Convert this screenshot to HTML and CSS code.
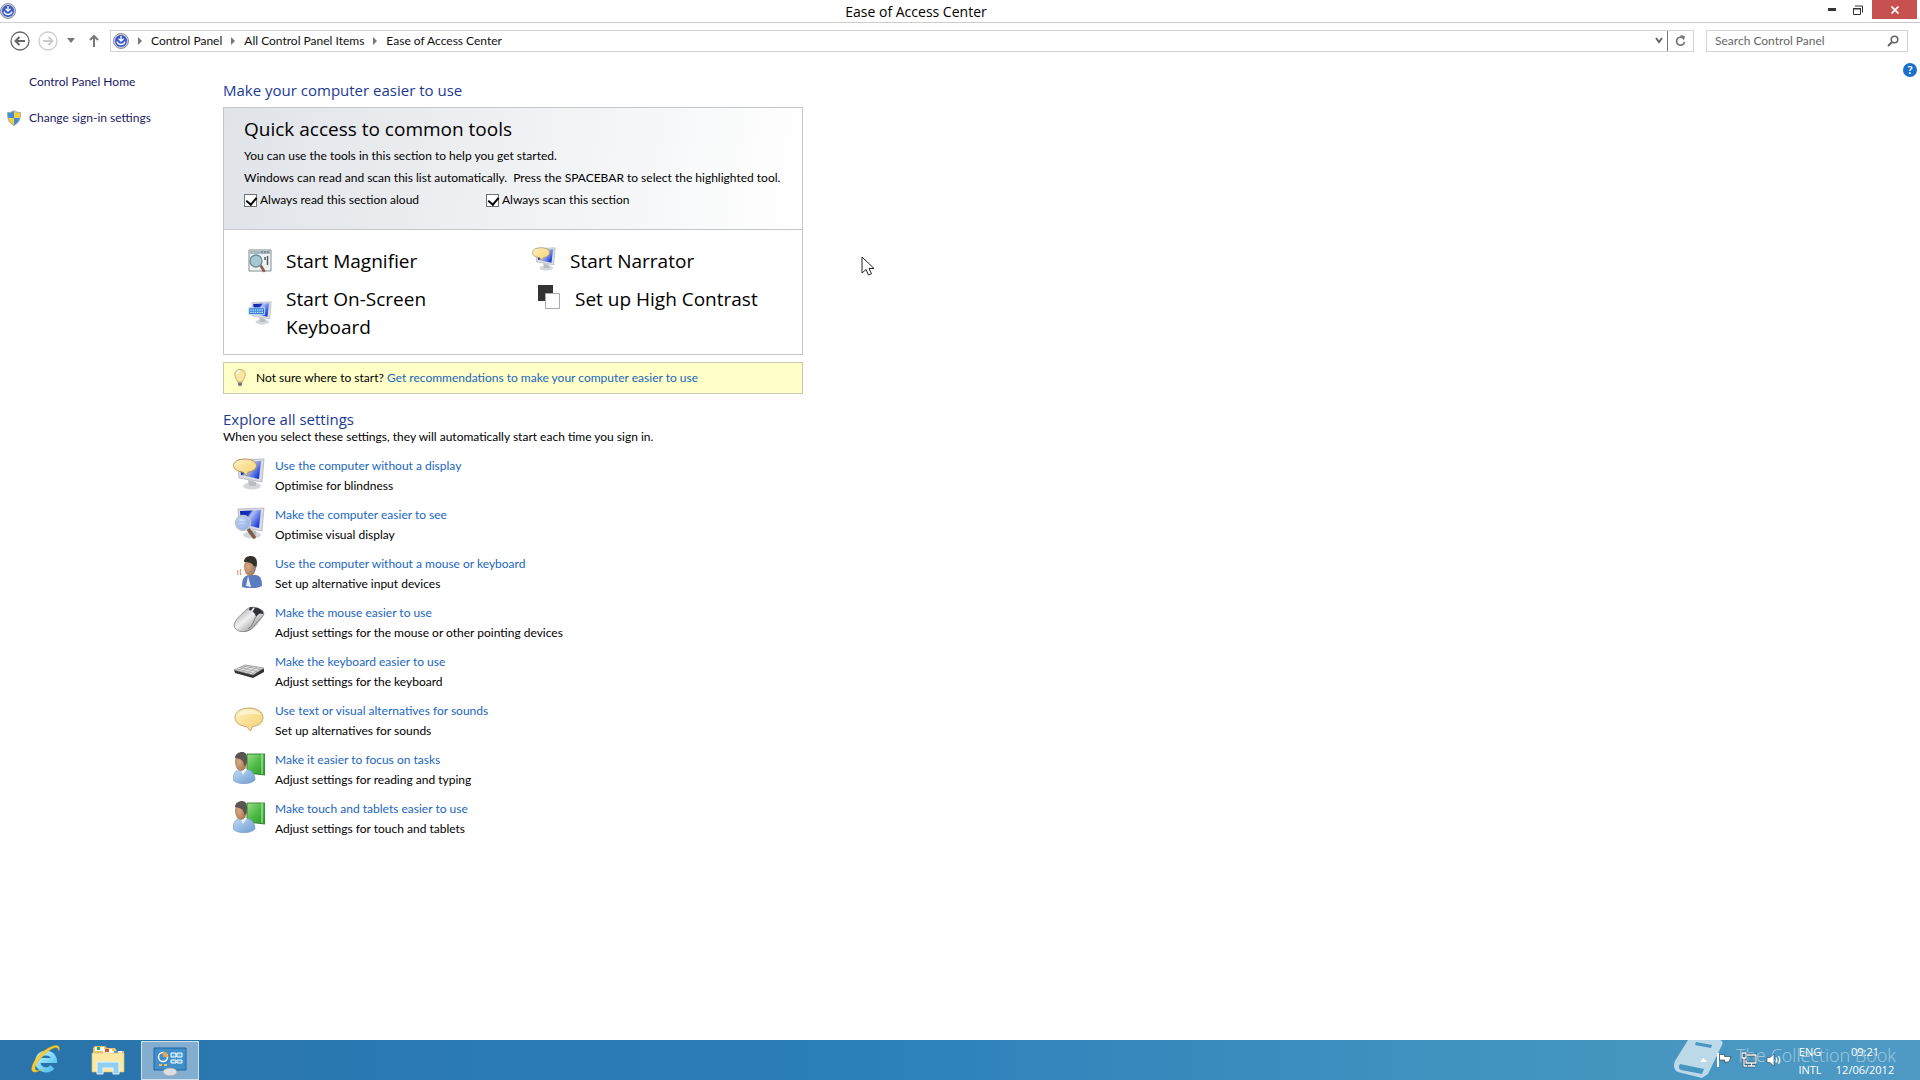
FILE: index.html
```html
<!DOCTYPE html>
<html lang="en">
<head>
  <meta charset="UTF-8" />
  <meta name="viewport" content="width=device-width, initial-scale=1.0" />
  <title>Ease of Access Center</title>
  <link rel="stylesheet" href="styles.css">
</head>
<body>
  <!-- shared icons -->
  <svg class="defs" width="0" height="0" aria-hidden="true">
    <defs>
      <linearGradient id="screenBlue" x1="0" y1="0" x2="1" y2="0.6">
        <stop offset="0" stop-color="#0a1fa8" />
        <stop offset="0.4" stop-color="#1634c4" />
        <stop offset="0.5" stop-color="#b4c4f4" />
        <stop offset="1" stop-color="#2040d8" />
      </linearGradient>
      <linearGradient id="bubbleGold" x1="0" y1="0" x2="1" y2="1">
        <stop offset="0" stop-color="#fff3c9" />
        <stop offset="0.5" stop-color="#fbdf93" />
        <stop offset="1" stop-color="#f6d27c" />
      </linearGradient>
      <linearGradient id="greenBook" x1="0" y1="0" x2="1" y2="1">
        <stop offset="0" stop-color="#9be08a" />
        <stop offset="0.5" stop-color="#4cba45" />
        <stop offset="1" stop-color="#2a9a2c" />
      </linearGradient>
      <linearGradient id="mouseBody" x1="0" y1="0" x2="1" y2="1">
        <stop offset="0" stop-color="#8d8d8d" />
        <stop offset="0.45" stop-color="#f0f0f0" />
        <stop offset="1" stop-color="#6d6d6d" />
      </linearGradient>
      <radialGradient id="skin" cx="0.35" cy="0.5" r="0.8">
        <stop offset="0" stop-color="#d8ab86" />
        <stop offset="1" stop-color="#94663f" />
      </radialGradient>
      <linearGradient id="shirt" x1="0" y1="0" x2="1" y2="1">
        <stop offset="0" stop-color="#c3dcf5" />
        <stop offset="1" stop-color="#6c9bd0" />
      </linearGradient>
      <radialGradient id="lens" cx="0.4" cy="0.4" r="0.7">
        <stop offset="0" stop-color="#d7e6fb" />
        <stop offset="1" stop-color="#7f9fe0" />
      </radialGradient>
      <linearGradient id="ieBlue" x1="0" y1="0" x2="1" y2="1">
        <stop offset="0" stop-color="#b9f0ff" />
        <stop offset="1" stop-color="#4cc0f2" />
      </linearGradient>

      <symbol id="i-access" viewBox="0 0 16 16">
        <circle cx="8" cy="8" r="7.5" fill="#c9cdd6" stroke="#8a8f9c" />
        <circle cx="8" cy="8" r="6" fill="#3a59cc" />
        <path d="M8 3v5M5.6 5.8L8 8.2l2.6-2.4M4 8.5c.6 2 2 3 4 3s3.4-1 4-3" fill="none" stroke="#fff" stroke-width="1.3" />
      </symbol>
      <symbol id="i-monitor" viewBox="0 0 32 32">
        <ellipse cx="19" cy="28" rx="9" ry="3.5" fill="#d4d6d9" />
        <path d="M15 22l8 2v4h-7z" fill="#b9bcc0" />
        <path d="M5 2l26-1-2 23L6 20z" fill="#d9dce1" stroke="#a7abb3" stroke-width="0.7" />
        <path d="M7 4l21-1-2 18L8 17z" fill="url(#screenBlue)" />
      </symbol>
      <symbol id="i-bubble" viewBox="0 0 32 32">
        <path d="M16 5c8 0 14 4 14 9.5S25 23 19.5 23.6L17.5 28l-4-4.4C6.5 23 2 19.5 2 14.5 2 9 8 5 16 5z" fill="url(#bubbleGold)" stroke="#b8a069" stroke-width="0.9" />
        <path d="M5 13c1-4 6-6 11-6s10 2 11 5c-7-2-16-1-22 1z" fill="#fff8df" opacity="0.7" />
      </symbol>
      <symbol id="i-narrator" viewBox="0 0 32 32">
        <use href="#i-monitor" />
        <path d="M12 1c7 0 11.5 3 11.5 6.5S19.5 13.6 15 14.2L14 18l-4-3.8C4.5 13.5.5 11 .5 7.5S5 1 12 1z" fill="url(#bubbleGold)" stroke="#a58c52" stroke-width="0.9" />
      </symbol>
      <symbol id="i-see" viewBox="0 0 32 32">
        <use href="#i-monitor" />
        <path d="M15 22l6 8" stroke="#7d5b48" stroke-width="3.6" stroke-linecap="round" />
        <circle cx="10" cy="16" r="7.3" fill="url(#lens)" stroke="#b9c3cf" stroke-width="1.8" />
        <path d="M5 15h10M6 18h8" stroke="#9cb3e2" />
      </symbol>
      <symbol id="i-speech" viewBox="0 0 32 32">
        <path d="M9 31c0-7 1-11 7-12h7c5 1 6 5 6 11-6 3-13 3-20 1z" fill="#5c7cc2" />
        <path d="M15 20l3 11-5-1z" fill="#e8eefa" />
        <ellipse cx="17" cy="11" rx="6" ry="9" fill="url(#skin)" />
        <path d="M11 6c0-4 3-6 7-6 5 0 7 4 5.5 11l-2 1c-1-4-3-6-10.5-6z" fill="#34302d" />
        <path d="M22 10c0 4-2 6-6 6" stroke="#8c8c98" fill="none" stroke-width="1.3" />
        <path d="M8 13q-2 3 0 6M5 14q-1 2 0 5" stroke="#d98a5a" fill="none" />
      </symbol>
      <symbol id="i-mouse" viewBox="0 0 32 32">
        <path d="M9 27c8 1 16-6 22-18l-2-4z" fill="#555" opacity="0.4" />
        <path d="M1 20C2 14 9 9 14 4c4-3 11-2 16 2 2 3 0 6-3 8-4 3-5 7-9 10-5 4-16 4-17-4z" fill="url(#mouseBody)" stroke="#777" stroke-width="0.7" />
        <path d="M17 2l8 1c4 2 6 4 5 6-3-1-4-1-7 3-1-4-3-6-7-7z" fill="#2f3136" />
        <path d="M21 3l-3 4" stroke="#e8e8e8" stroke-width="1.8" />
        <path d="M23 12c-3 4-3 9-8 12" stroke="#777" fill="none" />
      </symbol>
      <symbol id="i-keyboard" viewBox="0 0 32 32">
        <path d="M1 16l1 3 18 5 11-6v-3z" fill="#333" />
        <path d="M1 16l11-5 19 3-11 7z" fill="#e6e6e6" stroke="#777" stroke-width="0.6" />
        <path d="M4 15l17 4.5M7 13.5l17 4M10 12l18 3.5M9 18l10-6M14 19l10-6M5 16.5l9-5M19 20l9-6" stroke="#9a9a9a" stroke-width="0.7" />
      </symbol>
      <symbol id="i-person" viewBox="0 0 32 32">
        <path d="M14 2l18 0v21l-18-2z" fill="url(#greenBook)" stroke="#2a7d2c" stroke-width="0.9" />
        <path d="M29 2v20" stroke="#c3efb8" />
        <path d="M0 28c0-7 3-10 8-11h5c5 1 9 4 9 11-5 5-17 5-22 0z" fill="url(#shirt)" stroke="#6d93bf" stroke-width="0.6" />
        <path d="M7 17l3 6 4-6z" fill="#f0f6fd" />
        <ellipse cx="8" cy="10" rx="6" ry="9" fill="url(#skin)" />
        <path d="M2 6c0-4 4-6 7-6 5 0 6 5 4.5 12l-2.5 2c0-5-2-7-9-8z" fill="#5a5551" />
      </symbol>
      <symbol id="i-magnifier" viewBox="0 0 24 24">
        <path d="M1 1h22v21H1z" fill="#eef2f3" stroke="#7f8e96" />
        <path d="M2 2h20v3H2z" fill="#a9b8c0" />
        <path d="M17 2v2M20 2v2M14 2v2" stroke="#59666d" />
        <path d="M19.5 7v9M17 8v3" stroke="#4c5a62" stroke-width="1.5" />
        <path d="M13 17l3 5" stroke="#94594b" stroke-width="2.6" stroke-linecap="round" />
        <circle cx="8" cy="12" r="6" fill="#a6c9cf" stroke="#6c8e99" stroke-width="1.3" />
      </symbol>
      <symbol id="i-osk" viewBox="0 0 32 32">
        <use href="#i-monitor" />
        <path d="M1 9h21v9H1z" fill="#2b7fd8" stroke="#d4e8fb" />
        <path d="M3 12h17M3 15h17" stroke="#fff" stroke-width="1.5" stroke-dasharray="2 1" />
      </symbol>
      <symbol id="i-contrast" viewBox="0 0 24 24">
        <path d="M1 0h15v16H1z" fill="#333" />
        <path d="M8.5 8.5h14v15h-14z" fill="#fff" stroke="#aaa" />
      </symbol>
      <symbol id="i-bulb" viewBox="0 0 12 18">
        <path d="M6 .5C2.5.5.7 3 .7 5.5.7 8.5 3 9.5 3.5 13h5C9 9.5 11.3 8.5 11.3 5.5 11.3 3 9.5.5 6 .5z" fill="#fbe7a4" stroke="#b69b58" stroke-width="0.8" />
        <path d="M3 5c0-2 1-3 3-3" stroke="#fff" fill="none" stroke-width="1.3" />
        <path d="M4 13.5h4v2.5L6 17.5 4 16z" fill="#777" />
      </symbol>
      <symbol id="i-shield" viewBox="0 0 16 16">
        <path d="M8 .5C6 2 4 2.5 1.5 2.5c0 6 1 10 6.5 13z" fill="#3d8fd8" />
        <path d="M8 .5c2 1.5 4 2 6.5 2 0 6-1 10-6.5 13z" fill="#f4cf3a" />
        <path d="M8 8v7.5C5 14 3 11.5 2 8z" fill="#f4cf3a" />
        <path d="M8 8v7.5c3-1.5 5-4 6-7.5z" fill="#3d8fd8" />
        <path d="M8 .7C6 2 4 2.6 1.5 2.6c0 6 1 10 6.5 12.9 5.5-2.9 6.5-6.9 6.5-12.9C12 2.6 10 2 8 .7z" fill="none" stroke="#a4a9b0" />
      </symbol>
    </defs>
  </svg>

  <div class="window">
    <header class="titlebar">
      <svg class="app-icon" width="16" height="16"><use href="#i-access" /></svg>
      <h1>Ease of Access Center</h1>
      <div class="window-buttons">
        <button aria-label="Minimise"><svg width="8" height="3"><path d="M0 0h8v3H0z" fill="#333" /></svg></button>
        <button aria-label="Restore"><svg width="10" height="10" viewBox="0 0 10 10"><path d="M.5 3.5h7v6h-7zM2 1h7.5v6.5" fill="none" stroke="#333" /><path d="M0 3h8v1.5H0z" fill="#333" /></svg></button>
        <button class="close" aria-label="Close"><svg width="8" height="8" viewBox="0 0 8 8"><path d="M.5.5l7 7M7.5.5l-7 7" stroke="#fff" stroke-width="1.7" /></svg></button>
      </div>
    </header>

    <nav class="toolbar">
      <button class="round" aria-label="Back"><svg width="20" height="20" viewBox="0 0 20 20" fill="none" stroke="#666"><circle cx="10" cy="10" r="9" stroke-width="1.3" /><path d="M15 10H6M9.5 6l-4 4 4 4" stroke-width="2" /></svg></button>
      <button class="round" aria-label="Forward"><svg width="20" height="20" viewBox="0 0 20 20" fill="none" stroke="#ccc"><circle cx="10" cy="10" r="9" stroke-width="1.3" /><path d="M5 10h9M10.5 6l4 4-4 4" stroke-width="2" /></svg></button>
      <button class="recent" aria-label="Recent locations"><svg width="8" height="5"><path d="M0 0h8L4 5z" fill="#777" /></svg></button>
      <button class="up" aria-label="Up"><svg width="10" height="13" viewBox="0 0 10 13" fill="none" stroke="#777" stroke-width="2"><path d="M5 13V2M1 6l4-4 4 4" /></svg></button>

      <div class="address">
        <svg class="address-icon" width="16" height="16"><use href="#i-access" /></svg>
        <svg class="crumb" width="4" height="8"><path d="M0 0l4 4-4 4z" fill="#777" /></svg>
        <a href="#">Control Panel</a>
        <svg class="crumb" width="4" height="8"><path d="M0 0l4 4-4 4z" fill="#777" /></svg>
        <a href="#">All Control Panel Items</a>
        <svg class="crumb" width="4" height="8"><path d="M0 0l4 4-4 4z" fill="#777" /></svg>
        <a href="#">Ease of Access Center</a>
        <button class="history" aria-label="Previous locations"><svg width="8" height="7" viewBox="0 0 8 7"><path d="M1 1l3 4 3-4" fill="none" stroke="#666" stroke-width="2" /></svg></button>
        <button class="refresh" aria-label="Refresh"><svg width="11" height="12" viewBox="0 0 11 12"><path d="M8 3a4 4 0 1 0 1.5 4" fill="none" stroke="#777" stroke-width="1.7" /><path d="M5 0l5 1-1 4.5z" fill="#777" /></svg></button>
      </div>

      <div class="search">
        <input type="text" placeholder="Search Control Panel" aria-label="Search Control Panel">
        <button aria-label="Search"><svg width="12" height="12" viewBox="0 0 12 12" fill="none" stroke="#666"><circle cx="7.5" cy="4.5" r="3.3" stroke-width="1.6" /><path d="M5 7L1 11" stroke-width="2" /></svg></button>
      </div>
    </nav>

    <div class="page">
      <aside class="sidebar">
        <a href="#">Control Panel Home</a>
        <a href="#" class="with-shield"><svg width="16" height="16"><use href="#i-shield" /></svg>Change sign-in settings</a>
      </aside>

      <main class="content">
        <h2>Make your computer easier to use</h2>

        <section class="quick">
          <div class="quick-head">
            <h3>Quick access to common tools</h3>
            <p>You can use the tools in this section to help you get started.</p>
            <p class="wide-space">Windows can read and scan this list automatically.  Press the SPACEBAR to select the highlighted tool.</p>
            <div class="checks">
              <label><input type="checkbox" checked>Always read this section aloud</label>
              <label><input type="checkbox" checked>Always scan this section</label>
            </div>
          </div>
          <div class="tools">
            <div class="tools-col">
              <a href="#"><svg width="24" height="24"><use href="#i-magnifier" /></svg><span>Start Magnifier</span></a>
              <a href="#"><svg width="24" height="24"><use href="#i-osk" /></svg><span>Start On-Screen Keyboard</span></a>
            </div>
            <div class="tools-col">
              <a href="#"><svg width="24" height="24"><use href="#i-narrator" /></svg><span>Start Narrator</span></a>
              <a href="#" class="contrast"><svg width="24" height="24"><use href="#i-contrast" /></svg><span>Set up High Contrast</span></a>
            </div>
          </div>
        </section>

        <div class="tip">
          <svg width="12" height="18"><use href="#i-bulb" /></svg>
          <p>Not sure where to start? <a href="#">Get recommendations to make your computer easier to use</a></p>
        </div>

        <h2 class="explore">Explore all settings</h2>
        <p class="explore-note">When you select these settings, they will automatically start each time you sign in.</p>

        <ul class="settings">
          <li><svg width="32" height="32"><use href="#i-narrator" /></svg><div><a href="#">Use the computer without a display</a><p>Optimise for blindness</p></div></li>
          <li><svg width="32" height="32"><use href="#i-see" /></svg><div><a href="#">Make the computer easier to see</a><p>Optimise visual display</p></div></li>
          <li><svg width="32" height="32"><use href="#i-speech" /></svg><div><a href="#">Use the computer without a mouse or keyboard</a><p>Set up alternative input devices</p></div></li>
          <li><svg width="32" height="32"><use href="#i-mouse" /></svg><div><a href="#">Make the mouse easier to use</a><p>Adjust settings for the mouse or other pointing devices</p></div></li>
          <li><svg width="32" height="32"><use href="#i-keyboard" /></svg><div><a href="#">Make the keyboard easier to use</a><p>Adjust settings for the keyboard</p></div></li>
          <li><svg width="32" height="32"><use href="#i-bubble" /></svg><div><a href="#">Use text or visual alternatives for sounds</a><p>Set up alternatives for sounds</p></div></li>
          <li><svg width="32" height="32"><use href="#i-person" /></svg><div><a href="#">Make it easier to focus on tasks</a><p>Adjust settings for reading and typing</p></div></li>
          <li><svg width="32" height="32"><use href="#i-person" /></svg><div><a href="#">Make touch and tablets easier to use</a><p>Adjust settings for touch and tablets</p></div></li>
        </ul>
      </main>

      <button class="help" aria-label="Help">?</button>
    </div>
  </div>

  <footer class="taskbar">
    <button class="task" aria-label="Internet Explorer">
      <svg width="34" height="34" viewBox="0 0 34 34">
        <path d="M10 18.5h15.5a8.5 8.5 0 1 0-2 6.5" fill="none" stroke="url(#ieBlue)" stroke-width="5" />
        <path d="M30 9c1-3 0-6-4-5.5C18 5 7 14 3.5 23c-1.5 4-1 7.5 3 7 2-.2 4-1.2 6-2.7-3 1.5-5.7 1.9-6.3 0C5 23 14 11.5 23 6.7 27 4.7 29.5 5.5 30 9z" fill="#f8cf32" stroke="#d9a51c" stroke-width="0.5" />
      </svg>
    </button>
    <button class="task" aria-label="File Explorer">
      <svg width="34" height="34" viewBox="0 0 34 34">
        <path d="M2 6l2-2h10l2 2h8l2 3h7v20H2z" fill="#e9c568" />
        <path d="M4 5h9v4H4z" fill="#fff" /><path d="M6 5h3v3H6z" fill="#2fae48" />
        <path d="M12 7h9v4h-9z" fill="#fff" /><path d="M14 7h4v3h-4z" fill="#d6532e" />
        <path d="M20 9h11v4H20z" fill="#fff" /><path d="M23 9h4v3h-4z" fill="#3b9fd6" />
        <path d="M1 11h32v19H1z" fill="#fbe9a3" stroke="#dfc068" stroke-width="0.6" />
        <path d="M6 32V20h22v12h-6v-6H12v6z" fill="#8fd0f2" stroke="#e3f5fe" />
      </svg>
    </button>
    <button class="task active" aria-label="Ease of Access Center">
      <svg width="34" height="34" viewBox="0 0 34 34">
        <path d="M1 6h32v22H1z" fill="#3f8fca" stroke="#1f66a3" />
        <circle cx="10" cy="15" r="4.5" fill="none" stroke="#fff" stroke-width="1.5" />
        <path d="M10 15V9.5a5.5 5.5 0 0 1 5 5.5z" fill="#f5a23c" />
        <path d="M18 11h5v4h-5zM24 11h5v4h-5zM18 18h5v3h-5zM24 18h5v3h-5z" fill="#5aa9dd" stroke="#fff" />
        <path d="M6 22h3v2H6zM11 22h3v2h-3z" fill="#f5c04c" />
        <ellipse cx="17" cy="30" rx="7" ry="4" fill="#dcdfe2" stroke="#999" stroke-width="0.7" />
      </svg>
    </button>

    <div class="tray">
      <button aria-label="Show hidden icons"><svg width="7" height="4"><path d="M0 4h7L3.5 0z" fill="#fff" /></svg></button>
      <button aria-label="Action Center"><svg width="16" height="16" viewBox="0 0 16 16"><path d="M2 1v14" stroke="#fff" stroke-width="2" /><path d="M3.5 2.5h5v2H15L13 10H8.5V8h-5z" fill="#fff" stroke="#234" stroke-width="0.6" /></svg></button>
      <button aria-label="Network"><svg width="16" height="16" viewBox="0 0 16 16" fill="none"><path d="M6 3h9v8H5V8M7 14h7M10.5 11v3M1 1h4v5H1zM3 6v8h3" stroke="#234" stroke-width="2.4" /><path d="M6 3h9v8H5V8M7 14h7M10.5 11v3M1 1h4v5H1zM3 6v8h3" stroke="#fff" stroke-width="1.3" /></svg></button>
      <button aria-label="Volume"><svg width="16" height="16" viewBox="0 0 16 16"><path d="M1 5.5h3L8 2v12l-4-3.5H1z" fill="#fff" stroke="#345" stroke-width="0.6" /><path d="M10 5.5q1.5 2.5 0 5M12.5 4q2.5 4 0 8" fill="none" stroke="#fff" stroke-width="1.2" /></svg></button>
      <button class="lang"><span>ENG</span><span>INTL</span></button>
      <button class="clock"><span>09:21</span><span>12/06/2012</span></button>
    </div>

    <div class="watermark">
      <svg width="50" height="40" viewBox="0 0 50 40">
        <path fill-rule="evenodd" d="M14 0h32c3 1 3 3 2 5L34 34l-6 4-24-6c-4-2-5-6-3-11zM22 2l-1 3 16 3 1-3zM6 24c-2 3-1 5 1 6l21 4 2-5z" fill="#bcd9ea" />
      </svg>
      <span>The Collection Book</span>
    </div>
  </footer>

  <svg class="pointer" width="14" height="21" viewBox="0 0 14 21"><path d="M1 1v16l4-3.5 2.5 5.5 3-1.2L8 12.5h5z" fill="#fff" stroke="#222" /></svg>
</body>
</html>
```
FILE: styles.css
```css
* {
  box-sizing: border-box;
}

body {
  margin: 0;
  height: 100vh;
  display: flex;
  flex-direction: column;
  overflow: hidden;
  background: #fff;
  color: #000;
  font-family: Lato, "Open Sans", sans-serif;
  font-size: 12px;
  line-height: 16px;
}

h1, h2, h3, p, ul {
  margin: 0;
  padding: 0;
  font-weight: normal;
}

h1, h2, h3, .tools, .watermark {
  font-family: "Open Sans", "Noto Sans", sans-serif;
}

a {
  color: #1a66c0;
  text-decoration: none;
}

button {
  display: flex;
  align-items: center;
  justify-content: center;
  padding: 0;
  border: 0;
  background: none;
  font: inherit;
}

svg {
  display: block;
  flex: none;
}

.defs {
  position: absolute;
}

.window {
  flex: 1;
  display: flex;
  flex-direction: column;
  min-height: 0;
}

/* title bar */
.titlebar {
  display: grid;
  grid-template-columns: 104px 1fr 192px;
  height: 23px;
  border-bottom: 1px solid #ccc;
}

.app-icon {
  margin-top: 3px;
}

.titlebar h1 {
  font-size: 14px;
  line-height: 24px;
  text-align: center;
}

.window-buttons {
  display: flex;
  justify-content: flex-end;
  height: 19px;
  padding-right: 3px;
}

.window-buttons button {
  width: 26px;
}

.window-buttons .close {
  width: 45px;
  margin-left: 1px;
  background: #c75050;
}

/* navigation row */
.toolbar {
  display: flex;
  align-items: center;
  height: 36px;
  padding: 7px 12px 8px 10px;
}

.round {
  margin-right: 8px;
}

.recent {
  width: 10px;
}

.up {
  width: 24px;
  margin: 0 4px 0 6px;
}

.address {
  flex: 1;
  display: flex;
  align-items: center;
  height: 22px;
  margin-right: 12px;
  border: 1px solid #d0d4d8;
}

.address-icon {
  margin-left: 2px;
}

.crumb {
  margin: 0 9px;
}

.address a {
  color: #111;
}

.history {
  width: 18px;
  height: 20px;
  margin-left: auto;
  border-right: 1px solid #777;
}

.refresh {
  width: 25px;
}

.search {
  display: flex;
  align-items: center;
  width: 202px;
  height: 22px;
  border: 1px solid #d0d4d8;
}

.search input {
  flex: 1;
  min-width: 0;
  padding: 0 8px;
  border: 0;
  background: none;
  font: inherit;
}

.search input::placeholder {
  color: #666;
  opacity: 1;
}

.search button {
  width: 28px;
}

/* page */
.page {
  flex: 1;
  display: flex;
  min-height: 0;
  padding-top: 4px;
}

.sidebar {
  width: 223px;
  padding: 11px 0 0 29px;
}

.sidebar a {
  display: block;
  margin-bottom: 20px;
  color: #1a1a66;
}

.sidebar .with-shield {
  display: flex;
  gap: 7px;
  margin-left: -23px;
}

.content {
  flex: 0 1 580px;
  min-width: 0;
  padding-top: 17px;
}

h2 {
  color: #1b3a94;
  font-size: 15px;
  line-height: 20px;
}

.quick {
  margin-top: 7px;
  border: 1px solid #c3c6ca;
}

.quick-head {
  padding: 7px 20px 21px;
  border-bottom: 1px solid #c3c6ca;
  background: linear-gradient(100deg, #e0e3e8, #eceef1 40%, #fff);
}

.quick-head h3 {
  font-size: 19px;
  line-height: 28px;
}

.quick-head p {
  padding-bottom: 6px;
}

.quick-head h3 + p {
  padding-top: 5px;
}

.wide-space {
  white-space: pre-wrap;
}

.checks {
  display: flex;
}

.checks label {
  display: flex;
  align-items: center;
  gap: 3px;
  width: 242px;
}

.checks input {
  appearance: none;
  width: 13px;
  height: 13px;
  margin: 0;
  border: 1px solid #707070;
  background: #fff;
}

.checks input:checked::before {
  content: "";
  display: block;
  width: 5px;
  height: 8px;
  margin: 0 0 0 3px;
  border: solid #000;
  border-width: 0 2px 2px 0;
  transform: rotate(40deg);
}

.tools {
  display: grid;
  grid-template-columns: 284px 1fr;
  padding: 17px 10px 3px 24px;
  font-size: 19px;
  line-height: 28px;
}

.tools a {
  display: flex;
  align-items: center;
  gap: 14px;
  margin-bottom: 10px;
  padding-right: 90px;
  color: #000;
}

.tools-col:last-child a {
  align-items: flex-start;
  padding-right: 0;
}

.tools .contrast {
  margin-left: 5px;
}

.tip {
  display: flex;
  align-items: center;
  gap: 10px;
  height: 32px;
  margin-top: 7px;
  padding: 0 10px;
  border: 1px solid #c9c9b0;
  background: #ffffc8;
}

.content .explore {
  margin-top: 15px;
}

.explore-note {
  line-height: 15px;
}

.settings {
  list-style: none;
  padding: 14px 0 0 10px;
}

.settings li {
  display: flex;
  gap: 10px;
  height: 49px;
}

.settings p {
  padding-top: 4px;
}

.help {
  width: 14px;
  height: 14px;
  margin: 0 3px 0 auto;
  border-radius: 50%;
  background: #1a6fc9;
  color: #fff;
  font-weight: bold;
}

/* taskbar */
.taskbar {
  position: relative;
  display: flex;
  height: 40px;
  padding-left: 17px;
  background: linear-gradient(90deg, #2a73ab, #2b80ba 45%, #3f93bf 75%, #4f9ac4);
  color: #fff;
}

.task {
  width: 58px;
  height: 39px;
  margin: 1px 4px 0 0;
  padding-bottom: 3px;
}

.task.active {
  border: 1px solid #cfe0ef;
  background: #84aed0;
}

.tray {
  display: flex;
  align-items: center;
  margin-left: auto;
  padding-right: 23px;
  z-index: 1;
}

.tray > button {
  margin-left: 9px;
  color: #fff;
}

.lang, .clock {
  flex-direction: column;
  padding-top: 2px;
  font-family: "Open Sans", "Noto Sans", sans-serif;
  font-size: 11px;
  line-height: 18px;
}

.tray .lang {
  width: 28px;
  margin-left: 14px;
  font-size: 11px;
}

.tray .clock {
  width: 64px;
  font-size: 11px;
}

.watermark {
  position: absolute;
  right: 24px;
  top: 0;
  display: flex;
  gap: 12px;
  color: #a0c8df;
  font-size: 18px;
  font-weight: 300;
  line-height: 30px;
}

/* mouse pointer */
.pointer {
  position: absolute;
  left: 861px;
  top: 256px;
}
```
